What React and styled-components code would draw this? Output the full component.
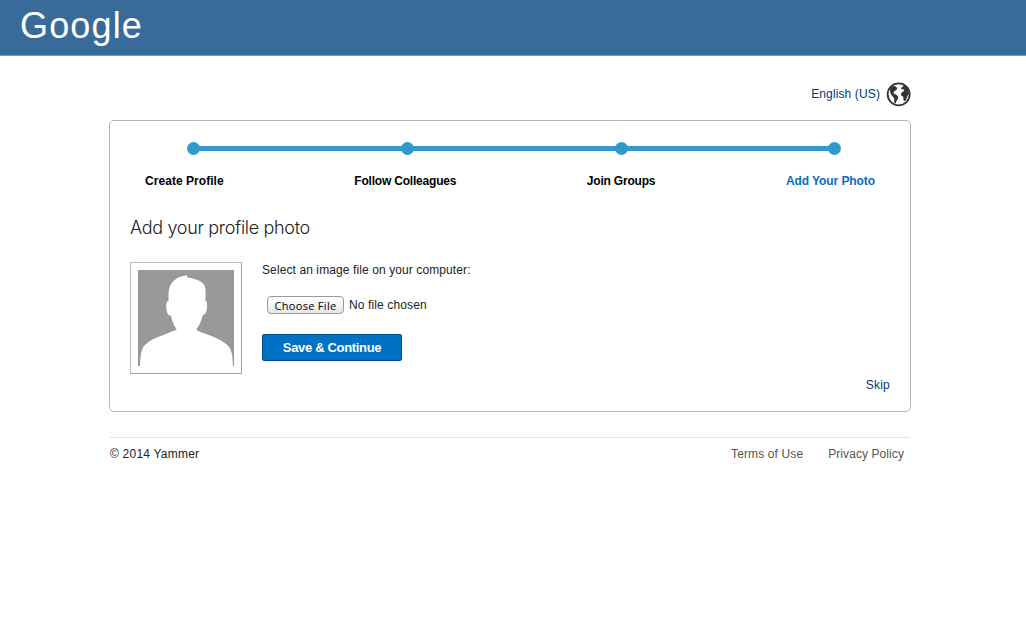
import React from "react";
import styled, { createGlobalStyle } from "styled-components";

const GlobalStyle = createGlobalStyle`
  body {
    margin: 0;
    background: #fff;
    color: #222;
    font: 12px/18px "Liberation Sans", Arial, sans-serif;
  }
`;

const Header = styled.header`
  box-sizing: border-box;
  height: 56px;
  padding-left: 20px;
  background: #386b9a;
  border-bottom: 1px solid #8a98a6;
`;

const NetworkName = styled.h1`
  margin: 0;
  color: #fff;
  font-size: 36px;
  font-weight: 400;
  line-height: 52px;
  letter-spacing: 1.15px;
`;

const Page = styled.div`
  width: 802px;
  margin: 0 0 0 109px;
`;

const Text = styled.span`
  letter-spacing: ${({ $spacing = 0 }) => $spacing}px;
  white-space: nowrap;
`;

const Language = styled.div`
  display: flex;
  justify-content: flex-end;
  align-items: center;
  gap: 6px;
  height: 26px;
  padding-top: 25px;
  color: #003580;
`;

const Card = styled.main`
  box-sizing: border-box;
  height: 292px;
  margin-top: 13px;
  padding: 20px;
  border: 1px solid #b5b5b5;
  border-radius: 5px;
`;

const Track = styled.div`
  box-sizing: border-box;
  display: flex;
  justify-content: space-between;
  align-items: center;
  width: 654.4px;
  height: 14px;
  margin-left: 57px;
  background: linear-gradient(#39c, #39c) center / calc(100% - 8px) 5px no-repeat;
`;

const Dot = styled.i`
  width: 13px;
  height: 13px;
  border-radius: 50%;
  background: #39c;
`;

const Steps = styled.div`
  display: flex;
  justify-content: space-between;
  margin: 17px 15px 0 15px;
  font-weight: 700;
`;

const Step = styled(Text)`
  color: ${({ $current }) => ($current ? "#0a6cc4" : "#000")};
`;

const Title = styled.h2`
  margin: 26px 0 0;
  color: #222;
  font: 300 18px/24px Inter, "Liberation Sans", sans-serif;
  letter-spacing: -0.32px;
`;

const Form = styled.div`
  display: flex;
  gap: 20px;
  margin-top: 22px;
`;

const Frame = styled.div`
  box-sizing: border-box;
  width: 112px;
  height: 112px;
  padding: 7px;
  border: 1px solid #bbb;
  border-bottom-color: #a5a5a5;
  border-right-color: #a5a5a5;

  svg { display: block; }
`;

const Fields = styled.div`
  display: flex;
  flex-direction: column;
  align-items: flex-start;
  line-height: 16px;
`;

const FileRow = styled.div`
  display: flex;
  gap: 5px;
  margin: 18px 0 20px 5px;
  line-height: 18px;
`;

const FileButton = styled.button`
  box-sizing: border-box;
  width: 77px;
  height: 18px;
  padding: 1px 0 0;
  border: 1px solid #999;
  border-radius: 4px;
  background: linear-gradient(#fff, #f5f5f5 50%, #e6e6e6);
  color: #000;
  font: 11px/15px "Open Sans", "Noto Sans", sans-serif;
  letter-spacing: 0.3px;
`;

const SaveButton = styled.button`
  box-sizing: border-box;
  width: 140px;
  height: 27px;
  padding: 0;
  border: 1px solid #00508c;
  border-radius: 2px;
  background: #0072c6;
  color: #fff;
  font: 700 13px/25px "Liberation Sans", Arial, sans-serif;
  letter-spacing: -0.33px;
`;

const SkipRow = styled.div`
  display: flex;
  justify-content: flex-end;
  margin-top: 2px;
  color: #003580;
`;

const Footer = styled.footer`
  display: flex;
  justify-content: space-between;
  margin: 25px 1px 0;
  padding: 7px 6px 0 0;
  border-top: 1px solid #e3e3e3;
`;

const FooterLinks = styled.nav`
  display: flex;
  gap: 25px;
  color: #555;
`;

const Globe = () => (
  <svg width="25" height="25" viewBox="0 0 75 75">
    <circle cx="38" cy="37" r="33" fill="#fff" stroke="#333" strokeWidth="5.5" />
    <path
      fill="#333"
      d="M13 19 21 12 28 13 34 18 31 24 25 28 22 34 32 39 37 45 35 52 31 58 29 65 24 60 25 51 21 44 14 36 12 28zM52 10 60 14 67 24 69 35 66 39 63 46 60 54 55 58 52 53 52 44 46 41 45 34 50 29 55 27 52 22 46 21 45 17 50 15z"
    />
  </svg>
);

const Portrait = () => (
  <svg width="96" height="96" viewBox="0 0 288 288">
    <path fill="#999" d="M0 0H288V288H0z" />
    <path
      fill="#fff"
      d="M6 288C7 264 9 243 16 231C31 210 67 199 89 190C103 185 112 182 116 178C108 168 102 152 99 137C91 137 86 129 85 113C84 99 86 93 92 92C91 80 91 65 94 54C99 36 118 20 136 18Q143 17 148 15L146 22C166 25 190 32 198 44C205 55 203 75 202 91C207 93 208 101 207 111C206 127 202 134 194 136C191 151 184 167 175 178C178 184 193 188 212 195C239 205 268 220 276 235C283 249 284 268 285 288z"
    />
  </svg>
);

const STEPS = [
  { label: "Create Profile", spacing: 0.05 },
  { label: "Follow Colleagues", spacing: -0.2 },
  { label: "Join Groups", spacing: -0.2 },
  { label: "Add Your Photo", spacing: -0.08, current: true },
];

export default function App() {
  return (
    <>
      <GlobalStyle />
      <Header>
        <NetworkName>Google</NetworkName>
      </Header>
      <Page>
        <Language>
          <Text $spacing={0.12}>English (US)</Text>
          <Globe />
        </Language>
        <Card>
          <Track>
            {STEPS.map((s) => <Dot key={s.label} />)}
          </Track>
          <Steps>
            {STEPS.map((s) => (
              <Step key={s.label} $current={s.current} $spacing={s.spacing}>{s.label}</Step>
            ))}
          </Steps>
          <Title>Add your profile photo</Title>
          <Form>
            <Frame><Portrait /></Frame>
            <Fields>
              <Text $spacing={0.1}>Select an image file on your computer:</Text>
              <FileRow>
                <FileButton>Choose File</FileButton>
                <Text $spacing={0.12}>No file chosen</Text>
              </FileRow>
              <SaveButton>Save &amp; Continue</SaveButton>
            </Fields>
          </Form>
          <SkipRow><Text $spacing={0.2}>Skip</Text></SkipRow>
        </Card>
        <Footer>
          <Text $spacing={0.22}>© 2014 Yammer</Text>
          <FooterLinks>
            <Text $spacing={0.12}>Terms of Use</Text>
            <Text $spacing={0.08}>Privacy Policy</Text>
          </FooterLinks>
        </Footer>
      </Page>
    </>
  );
}
